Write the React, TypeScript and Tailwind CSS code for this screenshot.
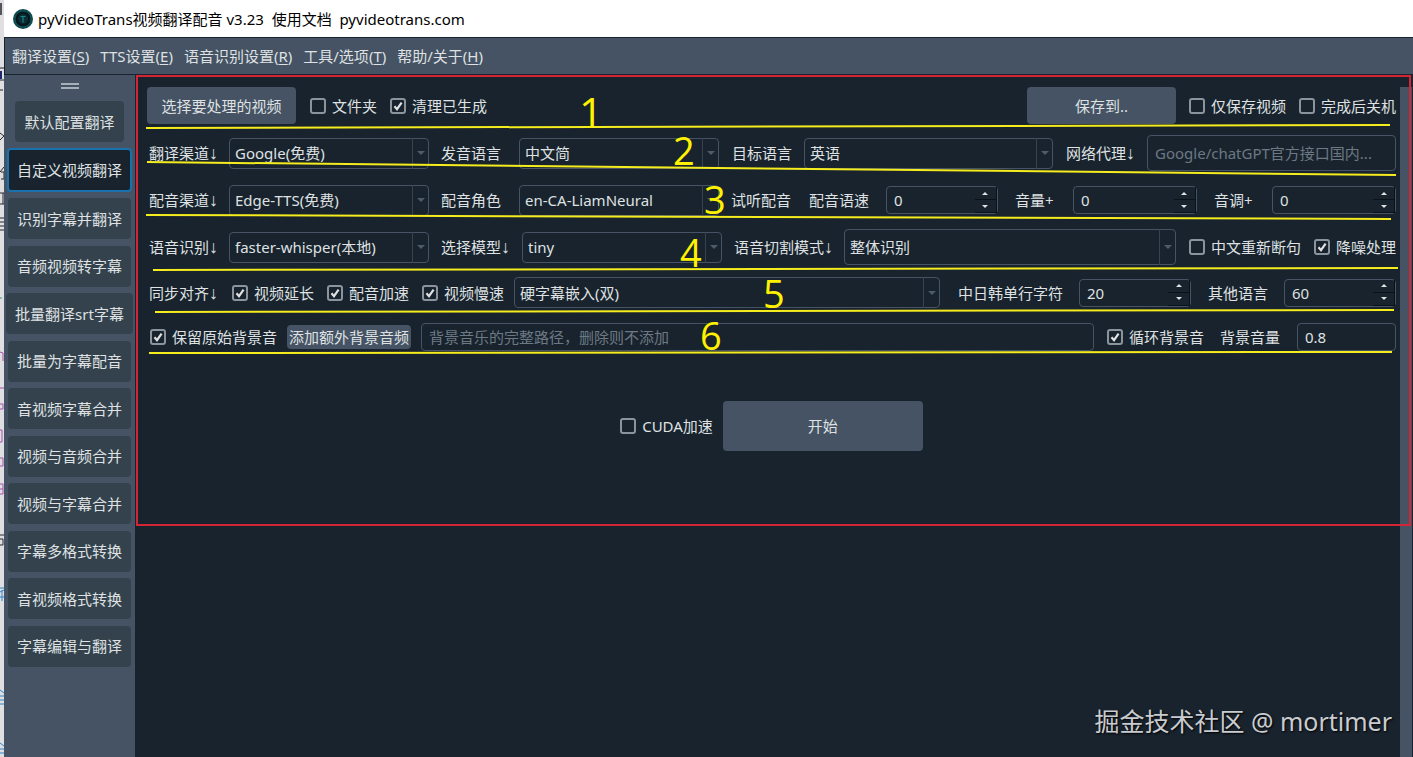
import React from 'react';

interface CheckProps {
  label: string;
  checked?: boolean;
  className?: string;
}

interface PickerProps {
  id: string;
  value: string;
  className?: string;
}

interface MenuEntry {
  label: string;
  hotkey: string;
}

const MENUS: MenuEntry[] = [
  { label: '翻译设置', hotkey: 'S' },
  { label: 'TTS设置', hotkey: 'E' },
  { label: '语音识别设置', hotkey: 'R' },
  { label: '工具/选项', hotkey: 'T' },
  { label: '帮助/关于', hotkey: 'H' },
];

const TOOLS = [
  '识别字幕并翻译',
  '音频视频转字幕',
  '批量翻译srt字幕',
  '批量为字幕配音',
  '音视频字幕合并',
  '视频与音频合并',
  '视频与字幕合并',
  '字幕多格式转换',
  '音视频格式转换',
  '字幕编辑与翻译',
];

// Underlines drawn below each form row, relative to the work area
const MARKS = [
  { n: '1', x: 444, y: 53, line: [11, 53, 1255, 50] },
  { n: '2', x: 538, y: 90, line: [12, 87, 1261, 100] },
  { n: '3', x: 569, y: 139, line: [11, 140, 1256, 144] },
  { n: '4', x: 545, y: 192, line: [18, 195, 1263, 193] },
  { n: '5', x: 628, y: 233, line: [20, 237, 1259, 235] },
  { n: '6', x: 565, y: 275, line: [14, 278, 1257, 277] },
];

// Sliver of the window behind this one
const BackWindow = () => (
  <div className="w-1 shrink-0">
    <svg className="h-[757px] w-1" fill="none">
      <path d="M0 3h2v12H0z" fill="#55555c" />
      <path d="M0 68h4M0 90h3M0 80h4" stroke="#22222a" />
      <path d="M0 71h2v8H0z" fill="#1b2a6b" />
      <path d="M0 133l4 3-4 4M0 172l4-5M1 172h3v7H1M0 193h4M3 193v11M0 204h4M0 218h4M0 222h4M0 226h4M0 230h4" stroke="#26262c" />
      <path d="M0 298h2" stroke="#2b9a8b" />
      <path d="M0 352l3 1v8M0 388h4M0 404h3v5h-3M0 430h2v12H0M0 458h3v8H0M0 484h3v10H0M0 489h3" stroke="#a550ab" />
      <path d="M0 535h4M0 539h3v6H0" stroke="#26262c" />
      <path d="M0 588h4M0 592l4-2M0 597h4M2 590v11M0 690l4 3M0 696h4M0 700h4M0 704h4M0 743l4 3M0 749h4M0 753h4" stroke="#2f86c9" />
    </svg>
  </div>
);

const AppLogo = () => (
  <svg viewBox="0 0 20 20" className="h-5 w-5 shrink-0">
    <circle cx="10" cy="10" r="10" fill="#0f4a4e" />
    <circle cx="10" cy="10" r="8" fill="#06181f" stroke="#125658" strokeWidth="1" />
    <circle cx="10" cy="10" r="5" fill="#0a2f35" />
    <path d="M7.5 7.5h5M10 7.5v6" stroke="#1d8583" strokeWidth="1.2" fill="none" />
  </svg>
);

const Arrow = () => <span className="font-['Liberation_Sans'] text-lg leading-none">↓</span>;

const Check: React.FC<CheckProps> = ({ label, checked = false, className = '' }) => (
  <label className={`flex shrink-0 items-center gap-1.5 whitespace-nowrap ${className}`}>
    <span className="grid h-4 w-4 shrink-0">
      <input
        type="checkbox"
        defaultChecked={checked}
        className="peer col-start-1 row-start-1 h-4 w-4 appearance-none rounded-[3px] border-2 border-[#8a949d] bg-[#19232d]"
      />
      <svg viewBox="0 0 16 16" className="pointer-events-none col-start-1 row-start-1 hidden h-4 w-4 peer-checked:block">
        <path d="M4.5 8.3 7 11.2 11.6 4.6" fill="none" stroke="#dfe1e2" strokeWidth="2.2" />
      </svg>
    </span>
    {label}
  </label>
);

const Picker: React.FC<PickerProps> = ({ id, value, className = '' }) => (
  <div className={`grid ${className}`}>
    <select
      id={id}
      defaultValue={value}
      className="col-start-1 row-start-1 w-full min-w-0 appearance-none rounded border border-[#455364] bg-[#19232d] pr-5 pl-[5px] outline-none"
    >
      <option>{value}</option>
    </select>
    <span className="pointer-events-none col-start-1 row-start-1 flex w-[17px] items-center justify-center justify-self-end border-l border-[#37444f]">
      <svg viewBox="0 0 8 4" className="h-1 w-2">
        <path d="M0 0h8L4 4z" fill="#4d5c6a" />
      </svg>
    </span>
  </div>
);

const Spin: React.FC<PickerProps> = ({ id, value, className = '' }) => (
  <div className={`flex h-7 min-w-0 rounded border border-[#455364] ${className}`}>
    <input id={id} defaultValue={value} inputMode="numeric" className="w-full min-w-0 bg-transparent pl-[7px] outline-none" />
    <span className="flex w-[22px] shrink-0 flex-col border-r border-[#0b1118]">
      <button type="button" aria-label="增加" className="flex flex-1 items-center justify-center border-b border-[#0b1118]">
        <svg viewBox="0 0 6 3" className="h-[3px] w-1.5">
          <path d="M0 3h6L3 0z" fill="#dfe1e2" />
        </svg>
      </button>
      <button type="button" aria-label="减少" className="flex flex-1 items-center justify-center border-b border-[#0b1118]">
        <svg viewBox="0 0 6 3" className="h-[3px] w-1.5">
          <path d="M0 0h6L3 3z" fill="#dfe1e2" />
        </svg>
      </button>
    </span>
  </div>
);

const Sidebar = () => (
  <nav className="flex w-[131px] shrink-0 flex-col items-center bg-[#455364]">
    <span className="mt-2 h-[6px] w-[18px] shrink-0 border-y-2 border-[#a5b0b9]" />
    <button type="button" className="mt-3 h-[41px] shrink-0 rounded bg-[#34424d] px-[9px]">默认配置翻译</button>
    <button type="button" className="mt-1.5 h-11 shrink-0 rounded border-2 border-[#1a72ac] bg-[#19232d] px-2">
      自定义视频翻译
    </button>
    <div className="mt-1.5 flex h-[469px] shrink-0 flex-col items-center justify-between">
      {TOOLS.map(tool => (
        <button key={tool} type="button" className="h-[41px] rounded bg-[#34424d] px-[9px] whitespace-nowrap">
          {tool}
        </button>
      ))}
    </div>
  </nav>
);

const Annotations = () => (
  <div className="pointer-events-none absolute inset-x-0 top-0 mr-0.5 ml-px h-[451px] border-2 border-[#d32535]">
    <svg className="-mt-0.5 -ml-[3px] h-full w-full overflow-visible font-['Open_Sans']">
      {MARKS.map(({ n, x, y, line }) => (
        <g key={n}>
          <line x1={line[0]} y1={line[1]} x2={line[2]} y2={line[3]} stroke="#f5ec1e" strokeWidth="2" />
          <text x={x} y={y} fontSize={n === '1' ? 42 : 38} fill="#fff200">{n}</text>
        </g>
      ))}
    </svg>
  </div>
);

const WorkArea = () => (
  <main className="relative flex min-w-0 flex-1 bg-[#19232d]">
    <form className="flex min-w-0 flex-1 flex-col gap-[11px] pt-3 pr-1 pl-3" onSubmit={e => e.preventDefault()}>
      <div className="flex h-[37px] items-center">
        <button type="button" className="h-[37px] w-[149px] rounded bg-[#455364]">选择要处理的视频</button>
        <Check label="文件夹" className="ml-3.5" />
        <Check label="清理已生成" checked className="ml-[13px]" />
        <button type="button" className="ml-auto h-[37px] w-[149px] rounded bg-[#455364]">保存到..</button>
        <Check label="仅保存视频" className="ml-[13px]" />
        <Check label="完成后关机" className="ml-[13px]" />
      </div>

      <div className="flex h-9 items-center pl-0.5">
        <label htmlFor="translate" className="w-20 shrink-0">翻译渠道<Arrow /></label>
        <Picker id="translate" value="Google(免费)" className="h-[31px] w-[200px] shrink-0" />
        <label htmlFor="source" className="ml-3 w-[78px] shrink-0">发音语言</label>
        <Picker id="source" value="中文简" className="h-[31px] w-[200px] shrink-0" />
        <label htmlFor="target" className="ml-[13px] w-[72px] shrink-0">目标语言</label>
        <Picker id="target" value="英语" className="h-[31px] min-w-0 flex-1" />
        <label htmlFor="proxy" className="ml-[13px] w-[81px] shrink-0">网络代理<Arrow /></label>
        <div className="min-w-0 flex-1">
          <input
            id="proxy"
            placeholder="Google/chatGPT官方接口国内..."
            className="h-9 w-full rounded border border-[#455364] bg-transparent px-[7px] outline-none placeholder:text-[#6c7984]"
          />
        </div>
      </div>

      <div className="flex h-9 items-center pl-0.5">
        <label htmlFor="tts" className="w-20 shrink-0">配音渠道<Arrow /></label>
        <Picker id="tts" value="Edge-TTS(免费)" className="h-[31px] w-[200px] shrink-0" />
        <label htmlFor="role" className="ml-3 w-[78px] shrink-0">配音角色</label>
        <Picker id="role" value="en-CA-LiamNeural" className="h-[31px] w-[200px] shrink-0" />
        <button type="button" className="ml-3 shrink-0">试听配音</button>
        <label htmlFor="rate" className="ml-[18px] w-[77px] shrink-0">配音语速</label>
        <Spin id="rate" value="0" className="flex-[9]" />
        <label htmlFor="volume" className="ml-[17px] w-[58px] shrink-0">音量+</label>
        <Spin id="volume" value="0" className="flex-[10]" />
        <label htmlFor="pitch" className="ml-[17px] w-[58px] shrink-0">音调+</label>
        <Spin id="pitch" value="0" className="flex-[10]" />
      </div>

      <div className="flex h-9 items-center pl-0.5">
        <label htmlFor="asr" className="w-20 shrink-0">语音识别<Arrow /></label>
        <Picker id="asr" value="faster-whisper(本地)" className="h-[31px] w-[200px] shrink-0" />
        <label htmlFor="model" className="ml-3 w-[81px] shrink-0">选择模型<Arrow /></label>
        <Picker id="model" value="tiny" className="h-[31px] w-[200px] shrink-0" />
        <label htmlFor="split" className="ml-3 w-[110px] shrink-0">语音切割模式<Arrow /></label>
        <Picker id="split" value="整体识别" className="h-9 min-w-0 flex-1" />
        <Check label="中文重新断句" className="ml-[13px]" />
        <Check label="降噪处理" checked className="ml-[13px]" />
      </div>

      <div className="flex h-[33px] items-center pl-0.5">
        <span className="w-[83px] shrink-0">同步对齐<Arrow /></span>
        <Check label="视频延长" checked />
        <Check label="配音加速" checked className="ml-[13px]" />
        <Check label="视频慢速" checked className="ml-[13px]" />
        <Picker id="subtitle" value="硬字幕嵌入(双)" className="ml-2.5 h-[31px] min-w-0 flex-1" />
        <label htmlFor="cjk" className="ml-[18px] w-[121px] shrink-0">中日韩单行字符</label>
        <Spin id="cjk" value="20" className="w-28 shrink-0" />
        <label htmlFor="other" className="ml-[17px] w-[76px] shrink-0">其他语言</label>
        <Spin id="other" value="60" className="w-28 shrink-0" />
      </div>

      <div className="flex h-[33px] items-center pl-[3px]">
        <Check label="保留原始背景音" checked />
        <button type="button" className="ml-2.5 h-6 shrink-0 rounded bg-[#455364] px-0.5">添加额外背景音频</button>
        <input
          aria-label="背景音频"
          placeholder="背景音乐的完整路径，删除则不添加"
          className="ml-2.5 h-7 min-w-0 flex-1 rounded border border-[#455364] bg-transparent px-[7px] outline-none placeholder:text-[#6c7984]"
        />
        <Check label="循环背景音" checked className="ml-[13px]" />
        <label htmlFor="bgm" className="ml-4 w-[77px] shrink-0">背景音量</label>
        <input
          id="bgm"
          defaultValue="0.8"
          className="h-7 w-[99px] shrink-0 rounded border border-[#455364] bg-transparent px-[7px] outline-none"
        />
      </div>

      <div className="mt-[37px] flex items-center justify-center gap-2.5">
        <Check label="CUDA加速" />
        <button type="submit" className="h-[50px] w-[200px] rounded bg-[#455364]">开始</button>
      </div>

      <p className="mt-auto self-end pr-1 pb-[18px] font-['Noto_Sans','Noto_Sans_CJK_SC',sans-serif] text-[25px] leading-9 text-[#c9ccd0] [text-shadow:1px_1px_2px_#000]">
        掘金技术社区 @ mortimer
      </p>
    </form>
    <div className="mt-3 mr-px w-3 shrink-0 bg-[#455364]" />
    <Annotations />
  </main>
);

export default function App() {
  return (
    <div className="flex min-h-screen bg-[#dfdfe2] font-['Noto_Sans','Noto_Sans_CJK_SC',sans-serif] text-[15px] leading-5 text-[#dfe1e2]">
      <BackWindow />
      <div className="flex min-w-0 flex-1 flex-col">
        <header className="flex h-[37px] items-center gap-[5px] bg-white pl-[9px] whitespace-pre text-black">
          <AppLogo />
          <h1>pyVideoTrans视频翻译配音 v3.23  使用文档  pyvideotrans.com</h1>
        </header>
        <div className="flex h-[38px] shrink-0 items-center gap-[11px] border-y border-l border-[#19232d] bg-[#455364] pl-[7px]">
          {MENUS.map(({ label, hotkey }) => (
            <button key={label} type="button">
              {label}(<span className="underline underline-offset-2">{hotkey}</span>)
            </button>
          ))}
        </div>
        <div className="flex flex-1">
          <Sidebar />
          <WorkArea />
        </div>
      </div>
    </div>
  );
}
